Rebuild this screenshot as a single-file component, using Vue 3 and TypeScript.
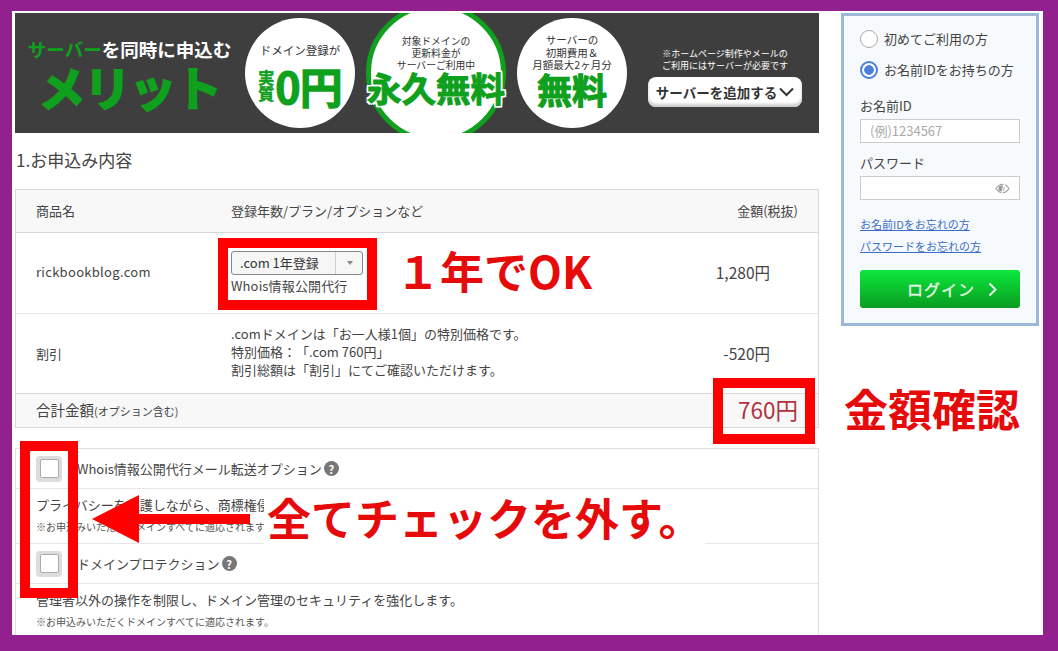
<script setup lang="ts">
interface OptionItem {
  name: string
  desc: string
  note: string
}

const options: OptionItem[] = [
  {
    name: 'Whois情報公開代行メール転送オプション',
    desc: 'プライバシーを保護しながら、商標権侵害などの連絡を受け取れます。',
    note: '※お申込みいただくドメインすべてに適応されます。',
  },
  {
    name: 'ドメインプロテクション',
    desc: '管理者以外の操作を制限し、ドメイン管理のセキュリティを強化します。',
    note: '※お申込みいただくドメインすべてに適応されます。',
  },
]
</script>

<template>
  <div class="frame">
    <div class="sheet">
      <main class="main">
        <!-- banner -->
        <section class="banner">
          <div class="merit">
            <p class="merit-top"><span class="green">サーバー</span>を同時に申込む</p>
            <p class="merit-big">メリット</p>
          </div>
          <div class="circle c1">
            <p class="c-text">ドメイン登録が</p>
            <div class="zero">
              <span class="jisshitsu">実<br />質</span><span class="zero-num">0円</span>
            </div>
          </div>
          <div class="ring">
            <p class="c-text small">対象ドメインの<br />更新料金が<br />サーバーご利用中</p>
            <p class="forever">永久無料</p>
          </div>
          <div class="circle c3">
            <p class="c-text small wide">サーバーの<br />初期費用＆<br />月額最大2ヶ月分</p>
            <p class="free">無料</p>
          </div>
          <div class="add">
            <p class="add-note">※ホームページ制作やメールの<br />ご利用にはサーバーが必要です</p>
            <div class="add-btn">
              サーバーを追加する
              <svg width="15" height="10" viewBox="0 0 15 10"><path d="M1 1.5l6.5 6.5L14 1.5" fill="none" stroke="#333" stroke-width="2" /></svg>
            </div>
          </div>
        </section>

        <h2 class="heading">1.お申込み内容</h2>

        <!-- order table -->
        <section class="table">
          <div class="row head">
            <span>商品名</span>
            <span>登録年数/プラン/オプションなど</span>
            <span class="head-amount">金額(税抜)</span>
          </div>
          <div class="row domain">
            <span class="domain-name">rickbookblog.com</span>
            <div>
              <div class="select">
                <span class="select-text">.com 1年登録</span>
                <span class="select-caret"></span>
              </div>
              <p class="whois">Whois情報公開代行</p>
            </div>
            <span class="amount">1,280円</span>
          </div>
          <div class="row discount">
            <span>割引</span>
            <p class="discount-text">.comドメインは「お一人様1個」の特別価格です。<br />特別価格：「.com 760円」<br />割引総額は「割引」にてご確認いただけます。</p>
            <span class="amount">-520円</span>
          </div>
          <div class="row total">
            <span class="total-label">合計金額<small>(オプション含む)</small></span>
            <span></span>
            <span class="total-amount">760円</span>
          </div>
        </section>

        <!-- options -->
        <section class="options">
          <div v-for="opt in options" :key="opt.name" class="option">
            <div class="option-head">
              <span class="check"><span class="check-inner"></span></span>
              <span class="option-name">{{ opt.name }}</span>
              <span class="help">?</span>
            </div>
            <div class="option-body">
              <p class="option-desc">{{ opt.desc }}</p>
              <p class="option-note">{{ opt.note }}</p>
            </div>
          </div>
        </section>
      </main>

      <!-- login -->
      <aside class="login">
        <label class="radio"><span class="dot"></span>初めてご利用の方</label>
        <label class="radio on"><span class="dot"></span>お名前IDをお持ちの方</label>
        <p class="field-label first">お名前ID</p>
        <div class="input placeholder">(例)1234567</div>
        <p class="field-label">パスワード</p>
        <div class="input eye-input">
          <svg width="15" height="11" viewBox="0 0 15 11">
            <path d="M1 5.5C3 2.5 5 1.2 7.5 1.2S12 2.5 14 5.5C12 8.5 10 9.8 7.5 9.8S3 8.5 1 5.5z" fill="none" stroke="#999" stroke-width="1.1" />
            <circle cx="6.5" cy="5.5" r="3" fill="#999" />
            <path d="M9.5 .5L6.5 10.5" stroke="#f8fafd" stroke-width="1.3" />
          </svg>
        </div>
        <a class="link first-link">お名前IDをお忘れの方</a>
        <a class="link">パスワードをお忘れの方</a>
        <button class="login-btn" type="button">
          ログイン
          <svg width="10" height="15" viewBox="0 0 10 15"><path d="M1.5 1.5l6 6-6 6" fill="none" stroke="#e9f8ea" stroke-width="2" /></svg>
        </button>
      </aside>
    </div>

    <!-- red annotations drawn over the page -->
    <div class="mark box-plan"></div>
    <div class="mark box-total"></div>
    <div class="mark box-checks"></div>
    <p class="note note-year">１年でOK</p>
    <p class="note note-price">金額確認</p>
    <p class="note note-uncheck">全てチェックを外す。</p>
    <svg class="arrow" width="160" height="50" viewBox="0 0 160 50">
      <path d="M0 24L47 0V19H158V29H47V48z" fill="#f00" />
    </svg>
  </div>
</template>

<style>
html,
body {
  margin: 0;
  overflow: hidden;
}
</style>

<style scoped>
p,
h2 {
  margin: 0;
}

.frame {
  position: relative;
  width: 1058px;
  height: 651px;
  box-sizing: border-box;
  padding: 11px 15px 16px 12px;
  background: #92208f;
  color: #444;
  font-family: "Noto Sans CJK JP", "Liberation Sans", sans-serif;
  font-size: 13px;
  line-height: 18px;
  text-spacing-trim: space-all;
  overflow: hidden;
}

.sheet {
  display: flex;
  gap: 22px;
  height: 100%;
  box-sizing: border-box;
  padding: 2px 4px 0 3px;
  background: #fff;
  overflow: hidden;
}

.main {
  width: 804px;
  flex-shrink: 0;
}

/* banner */
.banner {
  display: flex;
  align-items: center;
  height: 120px;
  background: #3e3e3e;
  overflow: hidden;
}

.merit {
  width: 205px;
  margin-left: 12px;
  margin-top: 2px;
  flex-shrink: 0;
  text-align: center;
  color: #fff;
  font-weight: 700;
}

.merit-top {
  font-size: 18.5px;
  line-height: 24px;
  white-space: nowrap;
}

.green {
  color: #0fa01e;
}

.merit-big {
  color: #0fa01e;
  font-size: 47px;
  line-height: 50px;
  letter-spacing: -1.5px;
  -webkit-text-stroke: 2px #0fa01e;
}

.circle,
.ring {
  display: flex;
  flex-direction: column;
  align-items: center;
  flex-shrink: 0;
  box-sizing: border-box;
  border-radius: 50%;
  background: #fff;
  color: #333;
  text-align: center;
}

.circle {
  width: 110px;
  height: 110px;
  padding-top: 16px;
}

.c1 {
  margin-left: 13px;
  padding-top: 25px;
}

.c-text {
  font-size: 11.5px;
  line-height: 14px;
  white-space: nowrap;
}

.c-text.small {
  font-size: 9.8px;
  line-height: 12px;
}

.c-text.wide {
  font-size: 10.5px;
  line-height: 12.5px;
}

.zero {
  display: flex;
  align-items: center;
  margin-top: 5px;
  color: #0fa01e;
  font-weight: 700;
}

.jisshitsu {
  font-size: 16px;
  line-height: 16px;
  -webkit-text-stroke: 0.5px #0fa01e;
}

.zero-num {
  margin-left: 1px;
  font-size: 43px;
  line-height: 46px;
  letter-spacing: -1px;
  -webkit-text-stroke: 1.2px #0fa01e;
}

.ring {
  width: 140px;
  height: 140px;
  margin-left: 11px;
  padding-top: 27px;
  border: 5px solid #0fa01e;
}

.forever {
  margin-top: -4px;
  color: #0fa01e;
  font-size: 34.5px;
  line-height: 40px;
  font-weight: 700;
  white-space: nowrap;
  -webkit-text-stroke: 1px #0fa01e;
  text-shadow: 2px 0 #fff, -2px 0 #fff, 0 2px #fff, 0 -2px #fff, 2px 2px #fff, -2px -2px #fff, 2px -2px #fff, -2px 2px #fff;
}

.c3 {
  margin-left: 11px;
}

.free {
  margin-top: -3px;
  color: #0fa01e;
  font-size: 35px;
  line-height: 40px;
  font-weight: 700;
  -webkit-text-stroke: 1.2px #0fa01e;
}

.add {
  display: flex;
  flex-direction: column;
  align-items: center;
  margin-left: 21px;
  margin-top: 8px;
  flex-shrink: 0;
  width: 154px;
}

.add-note {
  color: #fff;
  font-size: 9px;
  line-height: 12px;
  text-align: center;
  white-space: nowrap;
}

.add-btn {
  display: flex;
  align-items: center;
  justify-content: center;
  gap: 2px;
  width: 154px;
  height: 30px;
  margin-top: 5px;
  border-radius: 8px;
  background: #fff;
  box-shadow: inset 0 -3px 3px #ccc;
  color: #333;
  font-size: 13.5px;
  font-weight: 700;
  white-space: nowrap;
}

.heading {
  height: 56px;
  padding-left: 1px;
  font-size: 17px;
  font-weight: 400;
  line-height: 54px;
}

/* table */
.table {
  border: 1px solid #d8d8d8;
  width: 802px;
  margin-right: 1px;
}

.row {
  display: grid;
  grid-template-columns: 195px 1fr 168px;
  align-items: center;
  padding: 0 20px;
  border-bottom: 1px solid #e6e6e6;
}

.head,
.total {
  background: #f8f8f8;
}

.head {
  height: 42px;
  border-bottom-color: #d8d8d8;
}

.domain {
  height: 80px;
}

.discount {
  height: 79px;
  border-bottom-color: #d8d8d8;
}

.total {
  height: 33px;
  border-bottom: 0;
}

.domain-name {
  margin-top: -2px;
  letter-spacing: 0.3px;
}

.amount {
  margin-top: -2px;
  padding-right: 28px;
  text-align: right;
  font-size: 15.5px;
}

.head-amount {
  text-align: right;
}

.select {
  display: flex;
  align-items: center;
  box-sizing: border-box;
  width: 132px;
  height: 24px;
  border: 1px solid #888;
  border-radius: 3px;
  background: #f6f6f6;
}

.select-text {
  flex: 1;
  padding-left: 8px;
  color: #333;
  white-space: nowrap;
}

.select-caret {
  position: relative;
  width: 26px;
  height: 100%;
  border-left: 1px solid #d0d0d0;
}

.select-caret::after {
  content: "";
  position: absolute;
  left: 11px;
  top: 9px;
  border: 3px solid transparent;
  border-top: 4px solid #888;
}

.whois {
  margin-top: 2px;
  letter-spacing: 0.15px;
}

.discount-text {
  margin-top: -4px;
  font-size: 13px;
  line-height: 18px;
}

.total-label {
  font-size: 14.5px;
  white-space: nowrap;
}

.total-label small {
  font-size: 11px;
}

.total-amount {
  margin-top: -3px;
  color: #b3303c;
  text-align: right;
  font-size: 22.5px;
  line-height: 24px;
  white-space: nowrap;
}

/* options */
.options {
  width: 802px;
  margin-top: 20px;
  border: 1px solid #e0e0e0;
}

.option-head {
  display: flex;
  align-items: center;
  box-sizing: border-box;
  height: 40px;
  padding-left: 20px;
  border-bottom: 1px solid #e6e6e6;
}

.check {
  display: flex;
  align-items: center;
  justify-content: center;
  width: 26px;
  height: 26px;
  margin-right: 15px;
  border-radius: 4px;
  background: #ddd;
}

.check-inner {
  box-sizing: border-box;
  width: 19px;
  height: 19px;
  border: 1px solid #aaa;
  border-radius: 2px;
  background: #fff;
}

.help {
  display: flex;
  align-items: center;
  justify-content: center;
  width: 15px;
  height: 15px;
  margin-left: 2px;
  border-radius: 50%;
  background: #777;
  color: #fff;
  font-size: 11px;
  font-weight: 700;
}

.option-body {
  box-sizing: border-box;
  height: 55px;
  padding: 7px 20px 0;
  border-bottom: 1px solid #e6e6e6;
}

.option:last-child .option-body {
  border-bottom: 0;
}

.option-desc {
  line-height: 18px;
  white-space: nowrap;
}

.option-note {
  margin-top: 6px;
  color: #555;
  font-size: 10px;
  line-height: 14px;
}

/* login panel */
.login {
  display: flex;
  flex-direction: column;
  box-sizing: border-box;
  width: 198px;
  height: 313px;
  padding: 14px 16px 0;
  border: 3px solid #9db8d9;
  background: #f7fafd;
}

.radio {
  display: flex;
  align-items: center;
  gap: 6px;
  height: 18px;
  margin-bottom: 13px;
  white-space: nowrap;
}

.dot {
  box-sizing: border-box;
  width: 18px;
  height: 18px;
  border: 1px solid #aaa;
  border-radius: 50%;
  background: #fff;
}

.on .dot {
  border: 2px solid #4a7fdc;
  background: radial-gradient(circle, #4a7fdc 0 4.5px, #fff 5px);
}

.field-label {
  height: 19px;
  line-height: 19px;
  margin-top: 10px;
}

.field-label.first {
  margin-top: -1px;
  padding-top: 5px;
}

.input {
  display: flex;
  align-items: center;
  box-sizing: border-box;
  height: 24px;
  margin-top: 4px;
  border: 1px solid #ccc;
  background: #fff;
}

.placeholder {
  padding-left: 9px;
  color: #aaa;
}

.eye-input {
  justify-content: flex-end;
  padding-right: 9px;
}

.link {
  color: #3a6cc8;
  font-size: 11px;
  line-height: 14px;
  text-decoration: underline;
  white-space: nowrap;
}

.first-link {
  margin-top: 17px;
  margin-bottom: 8px;
}

.login-btn {
  display: flex;
  align-items: center;
  justify-content: center;
  gap: 13px;
  width: 160px;
  height: 38px;
  margin-top: 17px;
  padding: 0 0 0 25px;
  border: 0;
  border-radius: 3px;
  background: linear-gradient(#0ce83c, #0a9c20);
  color: #e9f8ea;
  font-family: inherit;
  font-size: 16px;
  font-weight: 400;
  letter-spacing: 1px;
  -webkit-text-stroke: 0.3px #e9f8ea;
}

/* annotations */
.mark {
  position: absolute;
  box-sizing: border-box;
  border: 10px solid #f00;
}

.box-plan {
  left: 218px;
  top: 238px;
  width: 159px;
  height: 72px;
}

.box-total {
  left: 713px;
  top: 378px;
  width: 102px;
  height: 66px;
}

.box-checks {
  left: 20px;
  top: 441px;
  width: 58px;
  height: 157px;
}

.note {
  position: absolute;
  color: #e60a0a;
  font-weight: 700;
  line-height: 1;
  white-space: nowrap;
}

.note-year {
  left: 396px;
  top: 248px;
  font-size: 44px;
}

.note-price {
  left: 844px;
  top: 386px;
  font-size: 44px;
}

.note-uncheck {
  left: 264px;
  top: 490px;
  width: 441px;
  height: 54px;
  padding-left: 3px;
  box-sizing: border-box;
  background: #fff;
  font-size: 44px;
  line-height: 54px;
}

.arrow {
  position: absolute;
  left: 92px;
  top: 495px;
}
</style>
